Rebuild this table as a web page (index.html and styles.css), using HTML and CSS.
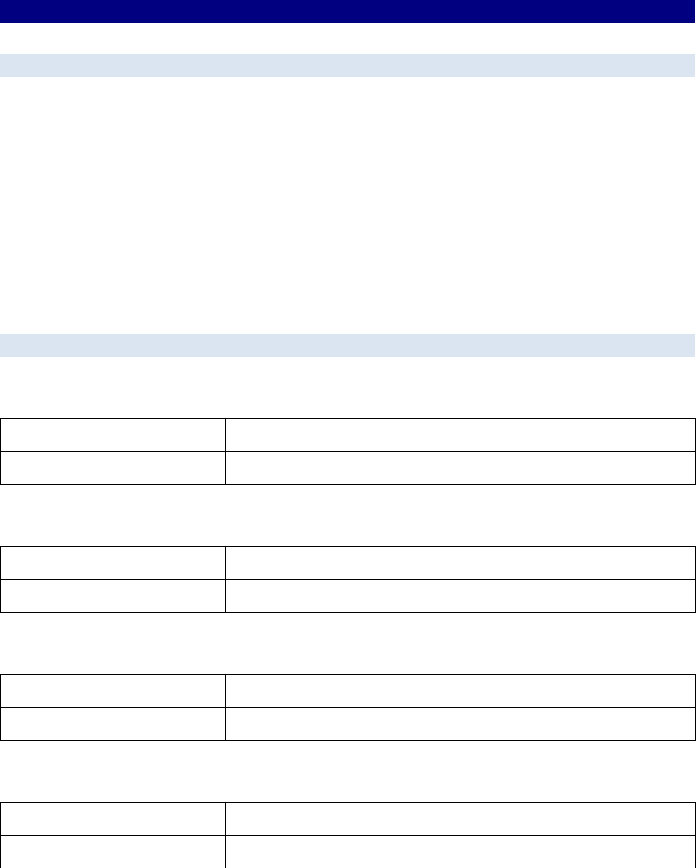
FILE: index.html
```html
<!DOCTYPE html>
<html>
<head>
<meta charset="utf-8">
<link rel="stylesheet" href="styles.css">
</head>
<body>
<div class="page">
  <div class="topbar"></div>
  <div class="section-bar first"></div>
  <div class="section-body"></div>
  <div class="section-bar"></div>
  <div class="tables">
    <table class="grid"><tr><td class="k"></td><td></td></tr><tr><td class="k"></td><td></td></tr></table>
    <table class="grid"><tr><td class="k"></td><td></td></tr><tr><td class="k"></td><td></td></tr></table>
    <table class="grid"><tr><td class="k"></td><td></td></tr><tr><td class="k"></td><td></td></tr></table>
    <table class="grid"><tr><td class="k"></td><td></td></tr><tr><td class="k"></td><td></td></tr></table>
  </div>
</div>
</body>
</html>
```
FILE: styles.css
```css
html, body {
  margin: 0;
  padding: 0;
  background: #ffffff;
  font-family: "Liberation Sans", Arial, sans-serif;
  font-size: 13px;
}
.page {
  width: 696px;
  display: flex;
  flex-direction: column;
}
.topbar {
  width: 695px;
  height: 23px;
  background: #000080;
}
.section-bar {
  width: 695px;
  height: 23px;
  background: #dbe5f1;
}
.section-bar.first {
  margin-top: 31px;
}
.section-body {
  height: 257px;
}
.tables {
  display: flex;
  flex-direction: column;
  gap: 61px;
  padding-top: 61px;
}
.grid {
  width: 696px;
  border-collapse: collapse;
  table-layout: fixed;
}
.grid td {
  border: 1px solid #000000;
  height: 33px;
  padding: 0;
  box-sizing: border-box;
}
.grid td.k {
  width: 225px;
}
```
